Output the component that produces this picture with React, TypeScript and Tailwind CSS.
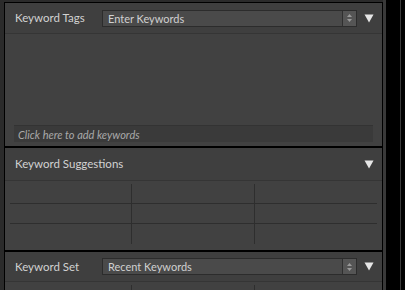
const font = "font-['Lato','Open_Sans',sans-serif]";

function Triangle() {
  return (
    <svg width="10" height="9" viewBox="0 0 10 9" className="shrink-0">
      <path d="M0.5 0.5 H9.5 L5 8.5 Z" fill="#e6e6e6" />
    </svg>
  );
}

function Stepper() {
  return (
    <div className="flex h-full w-[14px] flex-col items-center justify-center gap-[2px] border-l border-[#2f2f2f] bg-[#555555]">
      <svg width="5" height="3" viewBox="0 0 5 3">
        <path d="M0 3 L2.5 0 L5 3 Z" fill="#9a9a9a" />
      </svg>
      <svg width="5" height="3" viewBox="0 0 5 3">
        <path d="M0 0 L2.5 3 L5 0 Z" fill="#9a9a9a" />
      </svg>
    </div>
  );
}

function HeaderRow({ label, value, h }: { label: string; value?: string; h: string }) {
  return (
    <div className={`flex ${h} items-center border-b border-[#353535] pl-[10px] pr-[8px]`}>
      <span className={`${value ? "w-[87px]" : ""} shrink-0 whitespace-nowrap text-[11.5px] text-[#d2d2d2]`}>
        {label}
      </span>
      {value ? (
        <div className="mr-[7px] flex h-[17px] flex-1 items-center border border-[#2c2c2c] bg-[#4a4a4a]">
          <span className="flex-1 pl-[5px] text-[11px] leading-none text-[#d0d0d0]">{value}</span>
          <Stepper />
        </div>
      ) : (
        <div className="mr-[7px] flex-1" />
      )}
      <Triangle />
    </div>
  );
}

function KeywordGrid() {
  const cells = Array.from({ length: 9 }, (_, i) => i);
  return (
    <div className="mx-[5px] grid grid-cols-3">
      {cells.map((i) => (
        <div
          key={i}
          className={
            "h-[20px] border-[#2e2e2e] " +
            (i % 3 < 2 ? "border-r " : "") +
            (i < 6 ? "border-b" : "")
          }
        />
      ))}
    </div>
  );
}

export default function App() {
  return (
    <div className={`flex h-[290px] w-[405px] overflow-hidden bg-black ${font}`}>
      <div className="w-[4px] shrink-0 bg-[#2b2b2b]" />
      <div className="flex w-[379px] shrink-0 flex-col bg-[#2b2b2b] pt-[2px]">
        <div className="flex flex-1 flex-col border-l border-r border-t border-black bg-[#3f3f3f]">
          {/* Keyword Tags */}
          <HeaderRow label="Keyword Tags" value="Enter Keywords" h="h-[31px]" />
          <div className="flex h-[112px] flex-col justify-end bg-[#414141] px-[9px] pb-[4px]">
            <div className="flex h-[17px] items-center border-t border-[#333333] bg-[#3a3a3a] pl-[4px]">
              <span className="text-[11px] italic leading-none text-[#a9a9a9]">Click here to add keywords</span>
            </div>
          </div>
          <div className="h-[2px] bg-black" />

          {/* Keyword Suggestions */}
          <HeaderRow label="Keyword Suggestions" h="h-[33px]" />
          <div className="h-[69px] bg-[#414141] pt-[3px]">
            <KeywordGrid />
          </div>
          <div className="h-[2px] bg-black" />

          {/* Keyword Set */}
          <HeaderRow label="Keyword Set" value="Recent Keywords" h="h-[30px]" />
          <div className="flex-1 bg-[#414141] pt-[3px]">
            <KeywordGrid />
          </div>
        </div>
      </div>
      <div className="w-[3px] shrink-0 bg-[#393939]" />
      <div className="w-[14px] shrink-0 bg-black" />
      <div className="w-[1px] shrink-0 bg-[#3a3a3a]" />
      <div className="flex-1 bg-black" />
    </div>
  );
}
